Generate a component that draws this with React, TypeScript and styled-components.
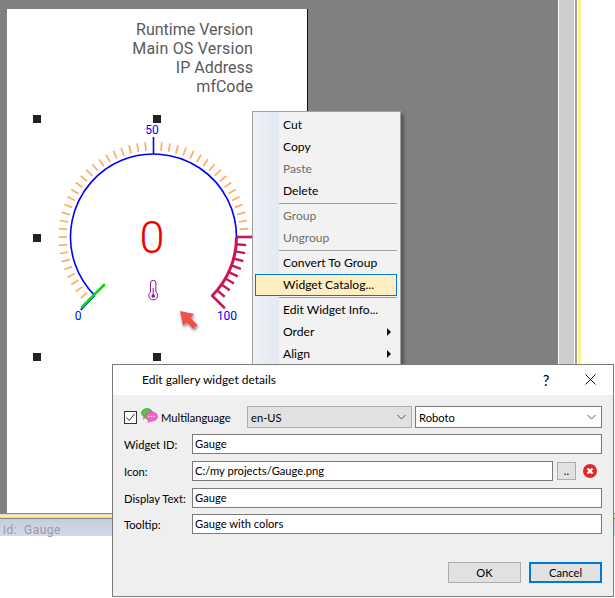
import React from 'react';
import styled, { createGlobalStyle } from 'styled-components';

const UI_FONT = 'Lato, "Noto Sans", sans-serif';

const GlobalStyle = createGlobalStyle`
    html, body {
        margin: 0;
        padding: 0;
        background: #fff;
    }
    * {
        box-sizing: border-box;
    }
`;

const Root = styled.div`
    position: relative;
    width: 615px;
    height: 598px;
    overflow: hidden;
    display: flex;
    flex-direction: column;
    background: #fff;
    font-family: ${UI_FONT};
`;

const TopArea = styled.div`
    display: flex;
    height: 513px;
`;

const Canvas = styled.div`
    width: 558px;
    background: #808080;
    padding: 9px 0 0 7px;
`;

const Page = styled.div`
    width: 301px;
    height: 504px;
    background: #fff;
    border-right: 1px solid #111;
    font-family: Roboto, sans-serif;
`;

const InfoBlock = styled.div`
    padding: 11px 54px 0 0;
    height: 101px;
    text-align: right;
    font-size: 16px;
    line-height: 19px;
    color: #5a5a5a;
`;

const InfoLine = styled.div<{ $spacing?: number }>`
    letter-spacing: ${({ $spacing }) => $spacing || 0}px;
`;

const GaugeArea = styled.div`
    position: relative;
    width: 300px;
    height: 250px;
`;

const GaugeSvg = styled.svg`
    display: block;
`;

const Handle = styled.span<{ $left: number; $top: number }>`
    position: absolute;
    left: ${({ $left }) => $left}px;
    top: ${({ $top }) => $top}px;
    width: 8px;
    height: 8px;
    background: #222;
`;

const ScrollGap = styled.div`
    width: 1px;
    background: #fff;
`;

const Scrollbar = styled.div`
    width: 15px;
    background: #cdcdcd;
`;

const SideEdge = styled.div`
    width: 4px;
    background: linear-gradient(to right, #fff 0 1px, #a0a0a0 1px 3px, #fff 3px);
`;

const SideYellow = styled.div`
    width: 3px;
    background: #fff38c;
`;

const SideRest = styled.div`
    flex: 1;
    background: #fff;
`;

const Divider = styled.div`
    height: 6px;
    background: linear-gradient(to bottom, #8a8a8a 0 1px, #d8d8d8 1px 2px, #fff38c 2px 4px, #d8d8d8 4px 5px, #8a8a8a 5px);
`;

const StatusBand = styled.div`
    height: 17px;
    padding-left: 3px;
    background: linear-gradient(to bottom, #c6cede, #d2d8e6);
    color: #a097a8;
    font-family: Roboto, sans-serif;
    font-size: 12px;
    letter-spacing: 0.5px;
    line-height: 22px;
    white-space: pre;
`;

const Menu = styled.div`
    position: absolute;
    left: 252px;
    top: 111px;
    width: 149px;
    padding: 2px 3px 3px 2px;
    border: 1px solid #a0a0a0;
    background: linear-gradient(to right, #eff1f4 0, #e3e9f3 26px, #f2f2f2 26px);
    box-shadow: 3px 3px 3px rgba(0, 0, 0, 0.35);
    font-size: 12.1px;
`;

const MenuItem = styled.div<{ $disabled?: boolean; $active?: boolean }>`
    position: relative;
    height: 22px;
    line-height: 20px;
    padding-left: 27px;
    border: 1px solid ${({ $active }) => ($active ? '#0078d7' : 'transparent')};
    background: ${({ $active }) => ($active ? '#ffeec2' : 'transparent')};
    color: ${({ $disabled }) => ($disabled ? '#6d6d6d' : '#000')};
    white-space: nowrap;
`;

const MenuSeparator = styled.div`
    height: 3px;
    margin-left: 24px;
    padding-top: 1px;

    &::after {
        content: '';
        display: block;
        height: 1px;
        background: #a0a0a0;
    }
`;

const SubArrow = styled.span`
    position: absolute;
    right: 5px;
    top: 6px;
    border-top: 4px solid transparent;
    border-bottom: 4px solid transparent;
    border-left: 4px solid #111;
`;

const Dialog = styled.div`
    position: absolute;
    left: 112px;
    top: 364px;
    width: 502px;
    height: 233px;
    display: flex;
    flex-direction: column;
    border: 1px solid #7a7a7a;
    background: #efefef;
    font-size: 11.2px;
    color: #000;
`;

const DialogHeader = styled.div`
    height: 30px;
    display: flex;
    align-items: center;
    padding: 0 0 1px 29px;
    background: #fff;
`;

const DialogTitle = styled.div`
    flex: 1;
    font-size: 12px;
`;

const HeaderHelp = styled.span`
    width: 14px;
    font-size: 15px;
    text-align: center;
    margin-right: 32px;
`;

const HeaderClose = styled.svg`
    margin-right: 17px;
`;

const DialogBody = styled.div`
    flex: 1;
    display: flex;
    flex-direction: column;
    padding: 11px 11px 13px 11px;
`;

const TopRow = styled.div`
    display: flex;
    align-items: center;
    height: 22px;
    margin-bottom: 6px;
`;

const Checkbox = styled.span`
    width: 13px;
    height: 13px;
    margin-right: 4px;
    border: 1px solid #333;
    background: #fff;
    display: flex;
`;

const LangIcon = styled.svg`
    margin-right: 3px;
    margin-top: -3px;
`;

const LangLabel = styled.span`
    width: 86px;
`;

const ComboGroup = styled.div`
    display: flex;
    gap: 3px;
`;

const Combo = styled.div<{ $flat?: boolean; $width: number }>`
    width: ${({ $width }) => $width}px;
    height: 22px;
    display: flex;
    align-items: center;
    justify-content: space-between;
    padding: 0 5px 0 3px;
    border: 1px solid ${({ $flat }) => ($flat ? '#adadad' : '#7a7a7a')};
    background: ${({ $flat }) => ($flat ? '#e1e1e1' : '#fff')};
`;

const FieldRow = styled.div<{ $tight?: boolean }>`
    display: flex;
    align-items: center;
    height: 20px;
    margin-bottom: ${({ $tight }) => ($tight ? 6 : 7)}px;
`;

const FieldLabel = styled.label`
    width: 68px;
    white-space: nowrap;
`;

const FieldInput = styled.div`
    flex: 1;
    height: 20px;
    line-height: 18px;
    padding-left: 2px;
    border: 1px solid #7a7a7a;
    background: #fff;
`;

const BrowseButton = styled.div`
    width: 19px;
    height: 18px;
    margin-left: 4px;
    border: 1px solid #adadad;
    background: #e1e1e1;
    text-align: center;
    line-height: 15px;
`;

const ClearIcon = styled.svg`
    margin: 0 5px 0 7px;
`;

const Footer = styled.div`
    margin-top: auto;
    display: flex;
    justify-content: flex-end;
    gap: 8px;
`;

const DialogButton = styled.div<{ $primary?: boolean }>`
    width: 73px;
    height: 21px;
    line-height: 17px;
    text-align: center;
    background: #e1e1e1;
    border: 2px solid ${({ $primary }) => ($primary ? '#0078d7' : '#adadad')};
    ${({ $primary }) => !$primary && 'border-width: 1px; line-height: 19px;'}
`;

const MENU_ITEMS = [
    { label: 'Cut' },
    { label: 'Copy' },
    { label: 'Paste', disabled: true },
    { label: 'Delete' },
    { separator: true },
    { label: 'Group', disabled: true },
    { label: 'Ungroup', disabled: true },
    { separator: true },
    { label: 'Convert To Group' },
    { label: 'Widget Catalog...', active: true },
    { separator: true },
    { label: 'Edit Widget Info...' },
    { label: 'Order', submenu: true },
    { label: 'Align', submenu: true },
];

const HANDLES = [
    [26, 5],
    [146, 5],
    [26, 124],
    [26, 243],
    [146, 243],
];

const CX = 153.5;
const CY = 237;
const R = 83;

// angle in degrees, 0 is straight up, clockwise
function polar(angle: number, radius: number) {
    const a = (angle * Math.PI) / 180;
    return { x: CX + radius * Math.sin(a), y: CY - radius * Math.cos(a) };
}

function Tick({ angle, from, to, color, width }: { angle: number; from: number; to: number; color: string; width: number }) {
    const a = polar(angle, from);
    const b = polar(angle, to);
    return <line x1={a.x} y1={a.y} x2={b.x} y2={b.y} stroke={color} strokeWidth={width} />;
}

function arcPath(start: number, end: number) {
    const a = polar(start, R);
    const b = polar(end, R);
    const large = end - start > 180 ? 1 : 0;
    return `M${a.x} ${a.y} A${R} ${R} 0 ${large} 1 ${b.x} ${b.y}`;
}

function Gauge() {
    const minor: number[] = [];
    for (let angle = -130; angle < 90; angle += 5) {
        if (angle !== 0) minor.push(angle);
    }
    const hot: number[] = [];
    for (let angle = 95; angle < 135; angle += 5) {
        hot.push(angle);
    }

    return (
        <GaugeSvg width={300} height={250} viewBox="7 110 300 250">
            <defs>
                <filter id="arrowShadow" x="-50%" y="-50%" width="200%" height="200%">
                    <feDropShadow dx="1" dy="2" stdDeviation="1.6" floodColor="#000" floodOpacity="0.45" />
                </filter>
            </defs>
            {minor.map((angle) => (
                <Tick key={angle} angle={angle} from={86.5} to={95} color="#ffac5f" width={1.7} />
            ))}
            <path d={arcPath(-135, 90)} fill="none" stroke="#0000ff" strokeWidth={1.6} />
            <Tick angle={-135} from={83} to={103} color="#0000ff" width={1.6} />
            <Tick angle={0} from={83} to={100} color="#0000ff" width={1.6} />
            <line x1={82} y1={307} x2={104} y2={285} stroke="#00e000" strokeWidth={2.6} strokeLinecap="round" />
            <path d={arcPath(90, 135)} fill="none" stroke="#cc1650" strokeWidth={3} />
            {hot.map((angle) => (
                <Tick key={angle} angle={angle} from={83} to={93} color="#cc1650" width={2.4} />
            ))}
            <Tick angle={90} from={83} to={99} color="#cc1650" width={2.6} />
            <Tick angle={135} from={82} to={101} color="#cc1650" width={2.6} />
            <text x={152} y={133.5} textAnchor="middle" fontSize={12} fill="#0000ff" fontFamily="Roboto, sans-serif">
                50
            </text>
            <text x={78} y={319.5} textAnchor="middle" fontSize={12} fill="#0000ff" fontFamily="Roboto, sans-serif">
                0
            </text>
            <text x={227} y={319.5} textAnchor="middle" fontSize={12} fill="#0000ff" fontFamily="Roboto, sans-serif">
                100
            </text>
            <text x={152} y={252.5} textAnchor="middle" fontSize={45} fontWeight={300} fill="#f00000" fontFamily="Roboto, sans-serif">
                0
            </text>
            <path
                d="M150.5 292 V283 a2.7 2.7 0 0 1 5.4 0 V292 a4.4 4.4 0 1 1 -5.4 0 Z"
                fill="none"
                stroke="#8a1a8f"
                strokeWidth={1}
            />
            <circle cx={153.2} cy={296} r={1.8} fill="#8a1a8f" />
            <line x1={153.2} y1={288} x2={153.2} y2={295} stroke="#8a1a8f" strokeWidth={1} />
            <polygon
                points="180,311 194,314 190.5,318 197.5,325 193,329 186.5,322 183,326"
                fill="#ee5148"
                filter="url(#arrowShadow)"
            />
        </GaugeSvg>
    );
}

function ContextMenu() {
    return (
        <Menu>
            {MENU_ITEMS.map((item, index) =>
                item.separator ? (
                    <MenuSeparator key={index} />
                ) : (
                    <MenuItem key={index} $disabled={item.disabled} $active={item.active}>
                        {item.label}
                        {item.submenu && <SubArrow />}
                    </MenuItem>
                )
            )}
        </Menu>
    );
}

function Chevron() {
    return (
        <svg width={9} height={6} viewBox="0 0 9 6">
            <path d="M0.5 1 L4.5 5 L8.5 1" fill="none" stroke="#555" strokeWidth={1} />
        </svg>
    );
}

function DetailsDialog() {
    return (
        <Dialog>
            <DialogHeader>
                <DialogTitle>Edit gallery widget details</DialogTitle>
                <HeaderHelp>?</HeaderHelp>
                <HeaderClose width={11} height={11} viewBox="0 0 11 11">
                    <path d="M0.5 0.5 L10.5 10.5 M10.5 0.5 L0.5 10.5" stroke="#111" strokeWidth={1} />
                </HeaderClose>
            </DialogHeader>
            <DialogBody>
                <TopRow>
                    <Checkbox>
                        <svg width={11} height={11} viewBox="0 0 11 11">
                            <path d="M1.5 5.5 L4.2 8.5 L9.5 1.8" fill="none" stroke="#333" strokeWidth={1} />
                        </svg>
                    </Checkbox>
                    <LangIcon width={17} height={15} viewBox="0 0 17 15">
                        <ellipse cx={6} cy={5} rx={5.5} ry={4.4} fill="#5cc04a" stroke="#2f8a2a" strokeWidth={0.6} />
                        <path d="M2.5 8 L2 12 L6 9 Z" fill="#5cc04a" />
                        <ellipse cx={10.5} cy={8.5} rx={6} ry={4.6} fill="#ee66c4" stroke="#c43a9a" strokeWidth={0.6} />
                        <path d="M7 12 L6.5 15 L11 13 Z" fill="#ee66c4" />
                        <circle cx={8} cy={8.5} r={0.7} fill="#fff" />
                        <circle cx={10.5} cy={8.5} r={0.7} fill="#fff" />
                        <circle cx={13} cy={8.5} r={0.7} fill="#fff" />
                    </LangIcon>
                    <LangLabel>Multilanguage</LangLabel>
                    <ComboGroup>
                        <Combo $flat $width={165}>
                            en-US
                            <Chevron />
                        </Combo>
                        <Combo $width={187}>
                            Roboto
                            <Chevron />
                        </Combo>
                    </ComboGroup>
                </TopRow>
                <FieldRow>
                    <FieldLabel>Widget ID:</FieldLabel>
                    <FieldInput>Gauge</FieldInput>
                </FieldRow>
                <FieldRow>
                    <FieldLabel>Icon:</FieldLabel>
                    <FieldInput>C:/my projects/Gauge.png</FieldInput>
                    <BrowseButton>..</BrowseButton>
                    <ClearIcon width={14} height={14} viewBox="0 0 14 14">
                        <circle cx={7} cy={7} r={7} fill="#e02a2a" />
                        <path d="M4.5 4.5 L9.5 9.5 M9.5 4.5 L4.5 9.5" stroke="#fff" strokeWidth={2.2} />
                    </ClearIcon>
                </FieldRow>
                <FieldRow $tight>
                    <FieldLabel>Display Text:</FieldLabel>
                    <FieldInput>Gauge</FieldInput>
                </FieldRow>
                <FieldRow>
                    <FieldLabel>Tooltip:</FieldLabel>
                    <FieldInput>Gauge with colors</FieldInput>
                </FieldRow>
                <Footer>
                    <DialogButton>OK</DialogButton>
                    <DialogButton $primary>Cancel</DialogButton>
                </Footer>
            </DialogBody>
        </Dialog>
    );
}

export default function App() {
    return (
        <Root>
            <GlobalStyle />
            <TopArea>
                <Canvas>
                    <Page>
                        <InfoBlock>
                            <InfoLine>Runtime Version</InfoLine>
                            <InfoLine $spacing={0.2}>Main OS Version</InfoLine>
                            <InfoLine>IP Address</InfoLine>
                            <InfoLine>mfCode</InfoLine>
                        </InfoBlock>
                        <GaugeArea>
                            <Gauge />
                            {HANDLES.map(([left, top]) => (
                                <Handle key={`${left}-${top}`} $left={left} $top={top} />
                            ))}
                        </GaugeArea>
                    </Page>
                </Canvas>
                <ScrollGap />
                <Scrollbar />
                <SideEdge />
                <SideYellow />
                <SideRest />
            </TopArea>
            <Divider />
            <StatusBand>{'id:  Gauge'}</StatusBand>
            <ContextMenu />
            <DetailsDialog />
        </Root>
    );
}
